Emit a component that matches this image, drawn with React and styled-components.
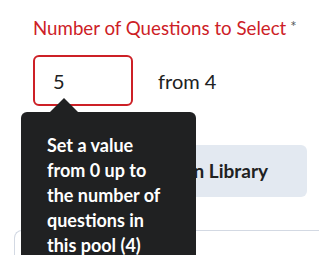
import React from 'react';
import styled, { createGlobalStyle } from 'styled-components';

const GlobalStyle = createGlobalStyle`
    body {
        margin: 0;
        background: #ffffff;
        font-family: Lato, "Noto Sans", sans-serif;
        color: #202122;
    }
`;

const Page = styled.div`
    height: 255px;
    overflow: hidden;
    padding-top: 17px;
`;

const Field = styled.div`
    padding-left: 33px;
`;

const Label = styled.div`
    color: #cd2026;
    font-size: 18.7px;
    line-height: 22px;
    display: flex;
    align-items: flex-start;
    gap: 4px;
`;

const Required = styled.span`
    color: #565a5c;
    font-size: 15px;
    line-height: 15px;
    margin-top: 2px;
`;

const InputRow = styled.div`
    display: flex;
    align-items: center;
    gap: 25px;
    margin-top: 16px;
`;

const InputWrap = styled.div`
    position: relative;
`;

const NumberInput = styled.div`
    box-sizing: border-box;
    width: 100px;
    height: 51px;
    border: 2px solid #cd2026;
    border-radius: 6px;
    padding: 0 18px;
    display: flex;
    align-items: center;
    font-size: 20px;
`;

const Suffix = styled.span`
    font-size: 20px;
`;

const Tooltip = styled.div`
    position: absolute;
    left: -12px;
    top: 57px;
    width: 175px;
    height: 160px;
    box-sizing: border-box;
    background: #202122;
    color: #ffffff;
    border-radius: 6px;
    padding: 21px 26px;
    font-size: 18px;
    font-weight: 700;
    line-height: 25px;
    z-index: 2;

    &::before {
        content: "";
        position: absolute;
        top: -14px;
        left: 29px;
        border-left: 14px solid transparent;
        border-right: 14px solid transparent;
        border-bottom: 14px solid #202122;
    }
`;

const Button = styled.div`
    display: inline-block;
    margin-top: 39px;
    margin-left: 33px;
    width: 274px;
    height: 52px;
    box-sizing: border-box;
    background: #e3e9f1;
    border-radius: 6px;
    font-size: 19px;
    font-weight: 700;
    line-height: 52px;
    text-align: right;
    padding-right: 39px;
`;

const Card = styled.div`
    margin-top: 33px;
    margin-left: 14px;
    height: 60px;
    border: 1px solid #d3d9e3;
    border-right: none;
    border-radius: 8px 0 0 0;
`;

export default function App() {
    return (
        <>
            <GlobalStyle />
            <Page>
                <Field>
                    <Label>
                        Number of Questions to Select
                        <Required>*</Required>
                    </Label>
                    <InputRow>
                        <InputWrap>
                            <NumberInput>5</NumberInput>
                            <Tooltip>
                                Set a value from 0 up to the number of questions in this pool (4)
                            </Tooltip>
                        </InputWrap>
                        <Suffix>from 4</Suffix>
                    </InputRow>
                </Field>
                <Button>Browse Question Library</Button>
                <Card />
            </Page>
        </>
    );
}
